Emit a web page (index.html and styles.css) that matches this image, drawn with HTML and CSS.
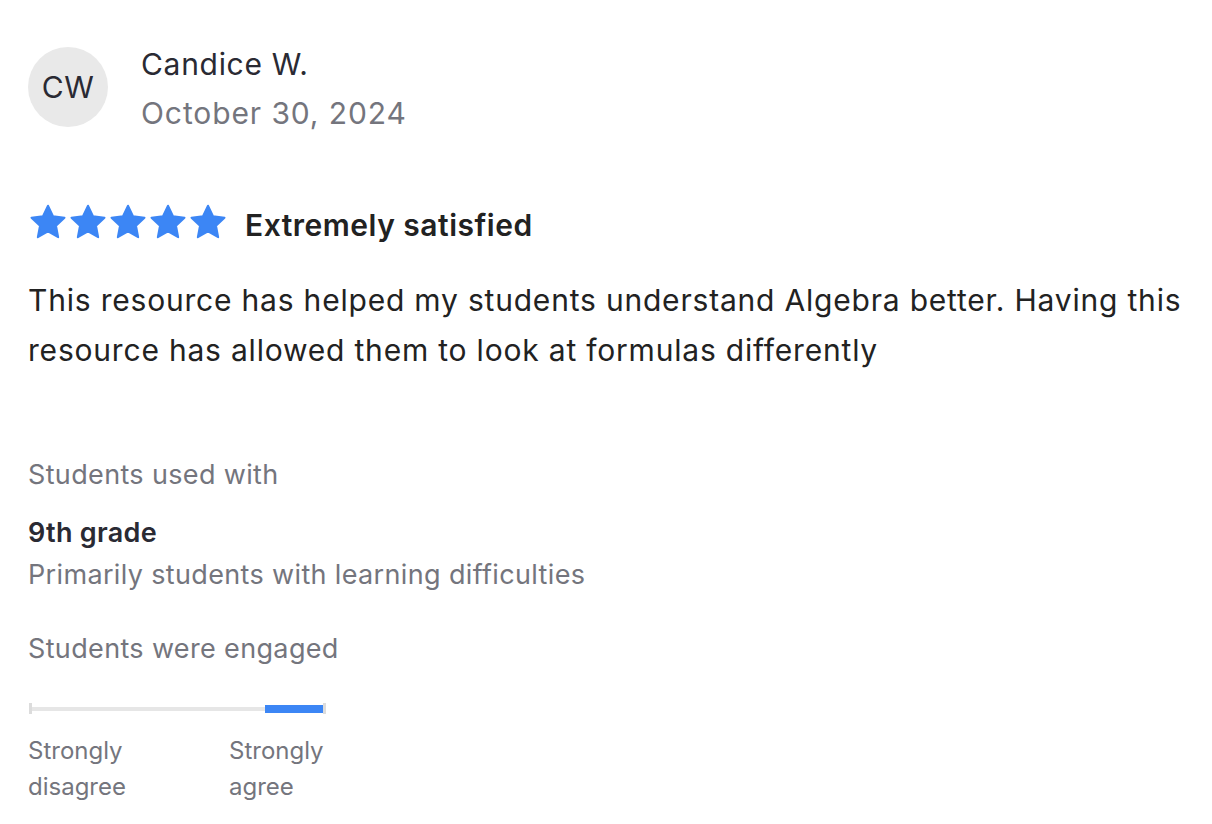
FILE: index.html
```html
<!DOCTYPE html>
<html lang="en">
<head>
    <meta charset="UTF-8">
    <meta name="viewport" content="width=device-width, initial-scale=1.0">
    <title>Review</title>
    <link rel="stylesheet" href="styles.css">
</head>
<body>

    <div class="review">

        <!-- Reviewer -->
        <div class="reviewer">
            <div class="avatar">CW</div>
            <div class="reviewer-info">
                <div class="reviewer-name">Candice W.</div>
                <div class="review-date">October 30, 2024</div>
            </div>
        </div>

        <!-- Rating -->
        <div class="rating">
            <div class="stars">
                <svg viewBox="0 0 24 24"><path d="M12 2.2l3 6.3 6.9.9-5.1 4.8 1.3 6.9L12 17.7l-6.1 3.4 1.3-6.9-5.1-4.8 6.9-.9z"/></svg>
                <svg viewBox="0 0 24 24"><path d="M12 2.2l3 6.3 6.9.9-5.1 4.8 1.3 6.9L12 17.7l-6.1 3.4 1.3-6.9-5.1-4.8 6.9-.9z"/></svg>
                <svg viewBox="0 0 24 24"><path d="M12 2.2l3 6.3 6.9.9-5.1 4.8 1.3 6.9L12 17.7l-6.1 3.4 1.3-6.9-5.1-4.8 6.9-.9z"/></svg>
                <svg viewBox="0 0 24 24"><path d="M12 2.2l3 6.3 6.9.9-5.1 4.8 1.3 6.9L12 17.7l-6.1 3.4 1.3-6.9-5.1-4.8 6.9-.9z"/></svg>
                <svg viewBox="0 0 24 24"><path d="M12 2.2l3 6.3 6.9.9-5.1 4.8 1.3 6.9L12 17.7l-6.1 3.4 1.3-6.9-5.1-4.8 6.9-.9z"/></svg>
            </div>
            <span class="rating-label">Extremely satisfied</span>
        </div>

        <!-- Review text -->
        <p class="review-text">This resource has helped my students understand Algebra better. Having this resource has allowed them to look at formulas differently</p>

        <!-- Students used with -->
        <div class="used-with">
            <div class="muted">Students used with</div>
            <div class="grade">9th grade</div>
            <div class="muted detail">Primarily students with learning difficulties</div>
        </div>

        <!-- Engagement -->
        <div class="engagement">
            <div class="muted">Students were engaged</div>
            <div class="scale">
                <div class="scale-fill"></div>
            </div>
            <div class="scale-labels">
                <span>Strongly<br>disagree</span>
                <span>Strongly<br>agree</span>
            </div>
        </div>

    </div>

</body>
</html>
```

FILE: styles.css
```css
body {
    font-family: Inter, "Liberation Sans", sans-serif;
    margin: 0;
    padding: 0;
    background-color: #fff;
    color: #222;
}

.review {
    padding: 46px 10px 20px 28px;
}

/* Reviewer */
.reviewer {
    display: flex;
    align-items: flex-start;
    gap: 33px;
}

.avatar {
    width: 80px;
    height: 80px;
    border-radius: 50%;
    background-color: #e9e9e9;
    color: #2a2a33;
    font-size: 30px;
    letter-spacing: 0.5px;
    display: flex;
    justify-content: center;
    align-items: center;
    margin-top: 1px;
    flex-shrink: 0;
}

.reviewer-name {
    font-size: 30px;
    letter-spacing: 0.7px;
    line-height: 36px;
    color: #2a2a33;
}

.review-date {
    font-size: 30px;
    letter-spacing: 0.9px;
    line-height: 50px;
    margin-top: 6px;
    color: #74757d;
}

/* Rating */
.rating {
    display: flex;
    align-items: center;
    margin-top: 64px;
    height: 40px;
}

.stars {
    display: flex;
}

.stars svg {
    width: 40px;
    height: 40px;
    fill: #3c86f5;
    stroke: #3c86f5;
    stroke-width: 1.2;
    stroke-linejoin: round;
}

.rating-label {
    font-size: 30px;
    font-weight: 600;
    letter-spacing: 0.5px;
    margin-left: 17px;
    padding-top: 6px;
    color: #222;
}

.review-text {
    font-size: 30px;
    letter-spacing: 0.8px;
    line-height: 50px;
    margin: 33px 0 0 0;
    color: #222;
}

.muted {
    color: #74757d;
    font-size: 27px;
    letter-spacing: 0.35px;
    line-height: 40px;
}

.used-with {
    margin-top: 80px;
}

.grade {
    font-size: 27px;
    font-weight: 600;
    letter-spacing: 0.3px;
    color: #2a2a33;
    margin-top: 18px;
    line-height: 40px;
}

.detail {
    margin-top: 2px;
}

.engagement {
    margin-top: 34px;
}

.scale {
    position: relative;
    width: 297px;
    height: 4px;
    background-color: #e6e6e6;
    margin-top: 38px;
    margin-left: 1px;
}

.scale::before,
.scale::after {
    content: "";
    position: absolute;
    top: -4px;
    width: 3px;
    height: 11px;
    background-color: #dcdcdc;
}

.scale::before {
    left: 0;
}

.scale::after {
    right: 0;
}

.scale-fill {
    position: absolute;
    right: 3px;
    top: -2px;
    width: 58px;
    height: 8px;
    background-color: #3c86f5;
}

.scale-labels {
    display: flex;
    gap: 70px;
    margin-top: 22px;
}

.scale-labels span {
    color: #74757d;
    font-size: 24px;
    line-height: 36px;
    width: 131px;
}
```
